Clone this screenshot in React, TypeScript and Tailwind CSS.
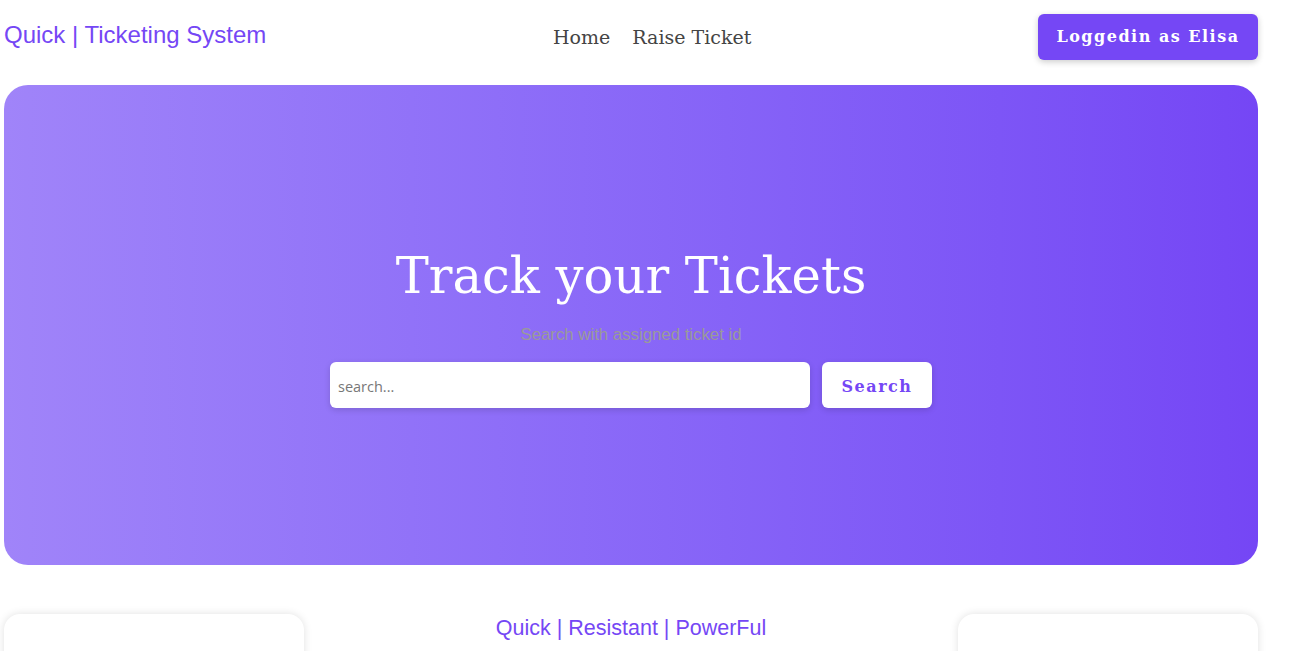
export default function App() {
  return (
    <div className="min-h-screen bg-white px-[4px] w-[1262px]">
      {/* Header */}
      <header className="flex items-start justify-between h-[85px] pt-[14px]">
        <a
          href="#"
          className="text-[24px] leading-[40px] text-[#7547f5] mt-[1px]"
          style={{ fontFamily: '"Liberation Sans", Arial, sans-serif' }}
        >
          Quick | Ticketing System
        </a>
        <nav
          className="flex items-center gap-[22px] h-[46px] text-[19px] text-[#444]"
          style={{ fontFamily: '"DejaVu Serif", serif' }}
        >
          <a href="#">Home</a>
          <a href="#">Raise Ticket</a>
        </nav>
        <button
          className="w-[220px] h-[46px] rounded-[6px] bg-[#7547f5] text-white font-bold text-[16px] tracking-[1.5px] shadow-[0_2px_6px_rgba(0,0,0,0.2)]"
          style={{ fontFamily: '"DejaVu Serif", serif' }}
        >
          Loggedin as Elisa
        </button>
      </header>

      {/* Hero */}
      <section className="h-[480px] rounded-[24px] bg-gradient-to-r from-[#a084f9] to-[#7546f5] flex flex-col items-center pt-[160px]">
        <h1
          className="text-[49.6px] leading-[62px] text-white"
          style={{ fontFamily: '"DejaVu Serif", serif' }}
        >
          Track your Tickets
        </h1>
        <p
          className="mt-[16px] text-[16.8px] leading-[24px] text-[#9a9a9a]"
          style={{ fontFamily: '"Liberation Sans", Arial, sans-serif' }}
        >
          Search with assigned ticket id
        </p>
        <div className="flex gap-[12px] mt-[15px]">
          <input
            placeholder="search..."
            className="w-[480px] h-[46px] rounded-[6px] bg-white px-[8px] pt-[2px] text-[14.5px] text-[#333] placeholder:text-[#777] outline-none shadow-[0_2px_6px_rgba(0,0,0,0.15)]"
            style={{ fontFamily: '"Open Sans", sans-serif' }}
          />
          <button
            className="w-[110px] h-[46px] rounded-[6px] bg-white pt-[3px] text-[#7547f5] font-bold text-[16px] tracking-[1.5px] shadow-[0_2px_6px_rgba(0,0,0,0.15)]"
            style={{ fontFamily: '"DejaVu Serif", serif' }}
          >
            Search
          </button>
        </div>
      </section>

      {/* Features */}
      <section className="grid grid-cols-[300px_1fr_300px] mt-[49px]">
        <div className="h-[200px] rounded-[16px] bg-white shadow-[0_0_8px_rgba(0,0,0,0.12)]" />
        <div className="text-center">
          <h2
            className="text-[21.5px] leading-[26px] text-[#7547f5] mt-[1px]"
            style={{ fontFamily: '"Liberation Sans", Arial, sans-serif' }}
          >
            Quick | Resistant | PowerFul
          </h2>
        </div>
        <div className="h-[200px] rounded-[16px] bg-white shadow-[0_0_8px_rgba(0,0,0,0.12)]" />
      </section>
    </div>
  );
}
